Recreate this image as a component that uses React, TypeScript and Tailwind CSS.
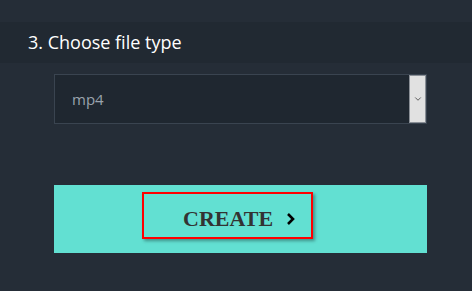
import { ChevronDown } from "lucide-react"

const App = () => {
  return (
    <div className="w-[472px] h-[291px] bg-[#252d37] pt-[22px] overflow-hidden">
      {/* Step title */}
      <div className="h-[41px] bg-[#212932] flex items-center pl-[28px]">
        <p className="text-[18px] text-white font-['Open_Sans',sans-serif]">3. Choose file type</p>
      </div>

      {/* File type select */}
      <div className="mt-[11px] mx-[54px] w-[373px] h-[50px] border border-[#3a4450] bg-[#1f2730] flex items-stretch">
        <div className="flex-1 flex items-center pl-[17px] text-[15px] text-[#9aa3ad] font-['Open_Sans',sans-serif]">mp4</div>
        <div className="w-[17px] bg-[#e1e1e1] border border-[#8a8f96] flex items-center justify-center">
          <ChevronDown size={10} strokeWidth={2} className="text-[#444]" />
        </div>
      </div>

      {/* Create button */}
      <div className="mt-[61px] mx-[54px] w-[373px] h-[68px] bg-[#62e0d2] flex items-start pt-[7px] pl-[88px]">
        <div className="w-[171px] h-[47px] border-2 border-[#ff0000] shadow-[2px_2px_3px_rgba(0,0,0,0.35)] flex items-center pl-[39px] pt-[6px] gap-[13px]">
          <span className="text-[22px] font-bold text-[#333] font-['Liberation_Serif',serif] leading-none">CREATE</span>
          <svg width="9" height="14" viewBox="0 0 9 14" className="text-black">
            <path d="M2 2 L7 7 L2 12" fill="none" stroke="currentColor" strokeWidth="2.6" />
          </svg>
        </div>
      </div>
    </div>
  )
}

export default App
